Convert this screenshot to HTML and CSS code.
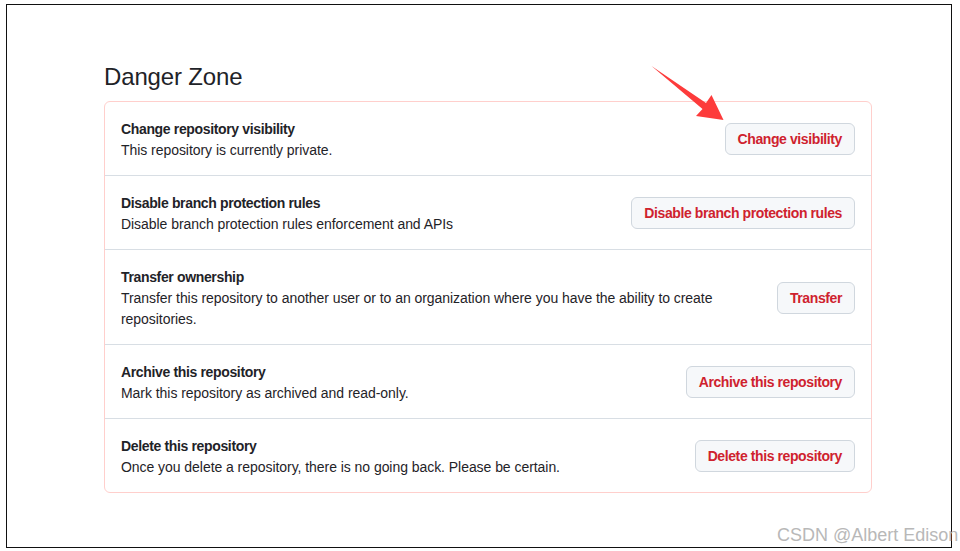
FILE: index.html
```html
<!DOCTYPE html>
<html lang="en">
<head>
<meta charset="utf-8">
<title>Danger Zone</title>
<link rel="stylesheet" href="styles.css">
</head>
<body>
<div class="frame">
  <div class="content">
    <h2 class="heading">Danger Zone</h2>
    <div class="danger-box">
      <div class="row">
        <div class="row-text">
          <div class="row-title">Change repository visibility</div>
          <div class="row-desc">This repository is currently private.</div>
        </div>
        <button class="btn-danger">Change visibility</button>
      </div>
      <div class="row">
        <div class="row-text">
          <div class="row-title">Disable branch protection rules</div>
          <div class="row-desc">Disable branch protection rules enforcement and APIs</div>
        </div>
        <button class="btn-danger">Disable branch protection rules</button>
      </div>
      <div class="row">
        <div class="row-text">
          <div class="row-title">Transfer ownership</div>
          <div class="row-desc">Transfer this repository to another user or to an organization where you have the ability to create repositories.</div>
        </div>
        <button class="btn-danger">Transfer</button>
      </div>
      <div class="row">
        <div class="row-text">
          <div class="row-title">Archive this repository</div>
          <div class="row-desc">Mark this repository as archived and read-only.</div>
        </div>
        <button class="btn-danger">Archive this repository</button>
      </div>
      <div class="row">
        <div class="row-text">
          <div class="row-title">Delete this repository</div>
          <div class="row-desc">Once you delete a repository, there is no going back. Please be certain.</div>
        </div>
        <button class="btn-danger">Delete this repository</button>
      </div>
    </div>
  </div>
  <svg class="arrow" width="100" height="70" viewBox="0 0 100 70" aria-hidden="true">
    <polygon points="11.5,8 66,45 71.5,37 83.5,62 56,58 62.5,51" fill="#fd3b3b"/>
  </svg>
  <div class="watermark">CSDN @Albert Edison</div>
</div>
</body>
</html>
```

FILE: styles.css
```css
html, body {
  margin: 0;
  padding: 0;
  background: #ffffff;
  overflow: hidden;
}

body {
  font-family: "Liberation Sans", Arial, sans-serif;
  color: #1f2328;
  font-size: 14px;
}

.frame {
  position: relative;
  margin: 4px 0 0 6px;
  width: 944px;
  height: 542px;
  border: 1px solid #111111;
  background: #ffffff;
}

.content {
  padding: 54px 0 0 97px;
  width: 768px;
}

.heading {
  margin: 0 0 6px;
  font-size: 24px;
  line-height: 36px;
  font-weight: 400;
  color: #1f2328;
  letter-spacing: -0.15px;
}

.danger-box {
  border: 1px solid #ffcfcc;
  border-radius: 6px;
}

.row {
  display: flex;
  align-items: center;
  gap: 16px;
  padding: 16px 16px 14px;
}

.row + .row {
  border-top: 1px solid #d8dee4;
}

.row-text {
  flex: 1 1 auto;
  min-width: 0;
  padding-top: 1px;
}

.row-title {
  font-weight: 700;
  line-height: 21px;
  letter-spacing: -0.35px;
}

.row-desc {
  line-height: 21px;
  letter-spacing: -0.05px;
}

.btn-danger {
  flex: 0 0 auto;
  height: 32px;
  margin-bottom: 1px;
  padding: 0 12px;
  border: 1px solid #d0d7de;
  border-radius: 6px;
  background: #f6f8fa;
  color: #cf222e;
  font-family: "Liberation Sans", Arial, sans-serif;
  font-size: 14px;
  font-weight: 700;
  letter-spacing: -0.4px;
  line-height: 20px;
  white-space: nowrap;
}

.arrow {
  position: absolute;
  left: 633px;
  top: 53px;
}

.watermark {
  position: absolute;
  left: 770px;
  top: 521px;
  font-family: "Liberation Sans", Arial, sans-serif;
  font-size: 18px;
  line-height: 18px;
  color: #b8b8b8;
  white-space: nowrap;
}
```
